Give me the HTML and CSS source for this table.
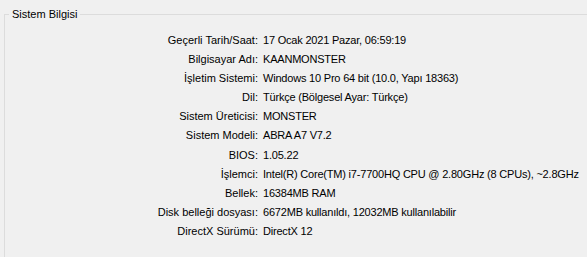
FILE: index.html
```html
<!DOCTYPE html>
<html lang="tr">
<head>
    <meta charset="UTF-8">
    <title>Sistem Bilgisi</title>
    <link rel="stylesheet" href="styles.css">
</head>
<body>
    <fieldset class="group">
        <legend>Sistem Bilgisi</legend>
        <div class="info-grid">
            <span class="label">Geçerli Tarih/Saat:</span><span class="value">17 Ocak 2021 Pazar, 06:59:19</span>
            <span class="label">Bilgisayar Adı:</span><span class="value">KAANMONSTER</span>
            <span class="label">İşletim Sistemi:</span><span class="value">Windows 10 Pro 64 bit (10.0, Yapı 18363)</span>
            <span class="label">Dil:</span><span class="value">Türkçe (Bölgesel Ayar: Türkçe)</span>
            <span class="label">Sistem Üreticisi:</span><span class="value">MONSTER</span>
            <span class="label">Sistem Modeli:</span><span class="value">ABRA A7 V7.2</span>
            <span class="label">BIOS:</span><span class="value">1.05.22</span>
            <span class="label">İşlemci:</span><span class="value">Intel(R) Core(TM) i7-7700HQ CPU @ 2.80GHz (8 CPUs), ~2.8GHz</span>
            <span class="label">Bellek:</span><span class="value">16384MB RAM</span>
            <span class="label">Disk belleği dosyası:</span><span class="value">6672MB kullanıldı, 12032MB kullanılabilir</span>
            <span class="label">DirectX Sürümü:</span><span class="value">DirectX 12</span>
        </div>
    </fieldset>
</body>
</html>
```

FILE: styles.css
```css
body {
    background-color: #f0f0f0;
    color: #000000;
    font-family: "Liberation Sans", Arial, sans-serif;
    font-size: 11px;
    margin: 0;
    padding: 8px 0 0 4px;
    overflow: hidden;
    height: 257px;
    box-sizing: border-box;
}
.group {
    border: 1px solid #dcdcdc;
    margin: 0 -10px 0 0;
    padding: 14px 0 40px 0;
    min-width: 0;
}
.group legend {
    padding: 0 3px;
    margin-left: 4px;
}
.info-grid {
    display: grid;
    grid-template-columns: 253px auto;
    column-gap: 5px;
    row-gap: 6.1px;
    line-height: 13px;
}
.info-grid .label {
    text-align: right;
}
.info-grid .value {
    white-space: nowrap;
    letter-spacing: -0.2px;
}
```
